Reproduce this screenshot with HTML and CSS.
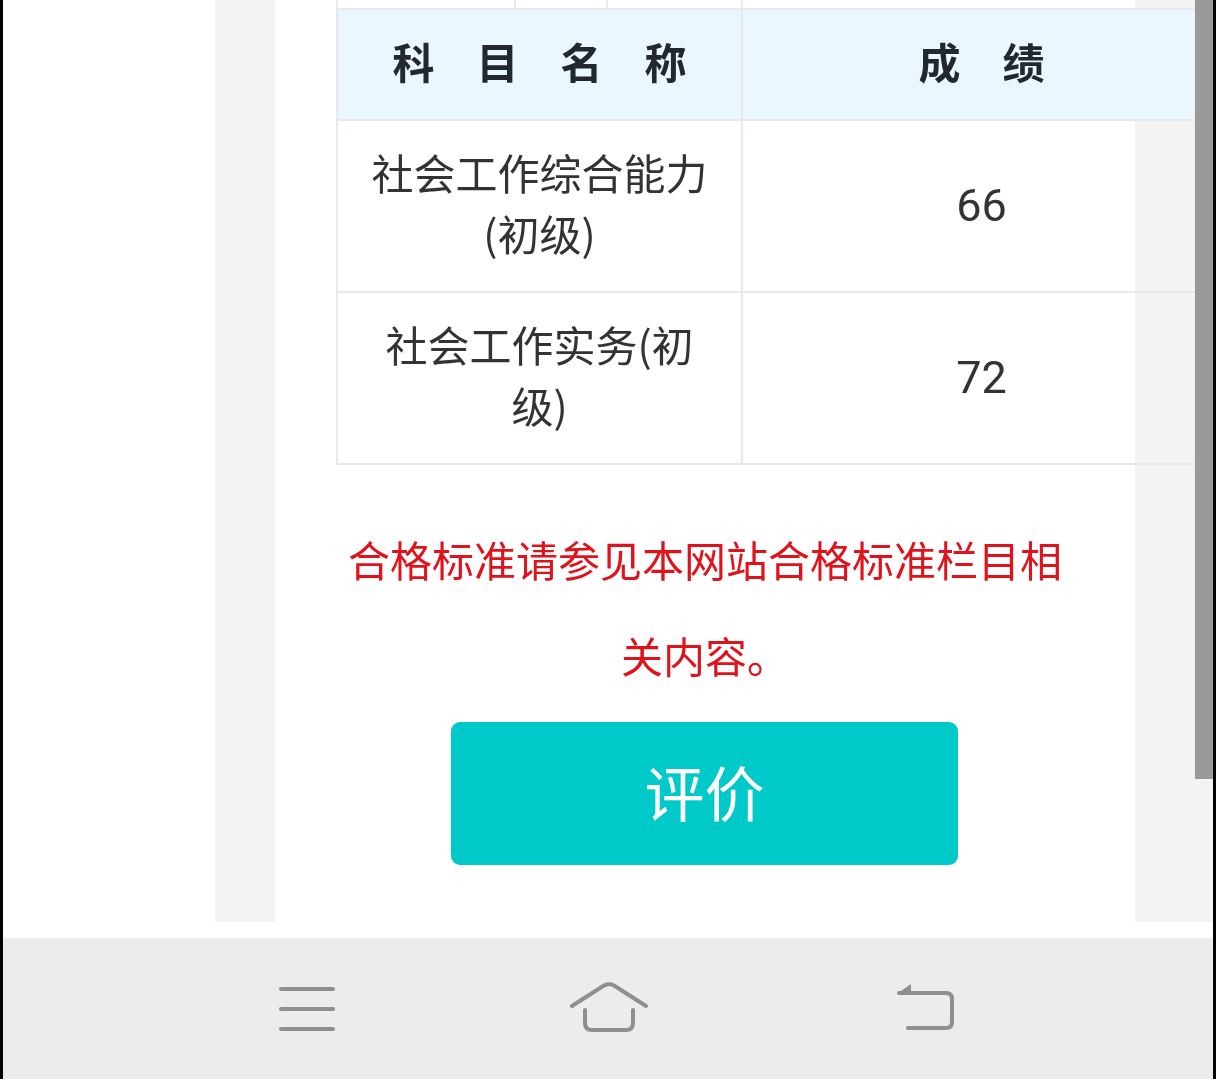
FILE: index.html
```html
<!DOCTYPE html>
<html lang="zh-CN">
<head>
    <meta charset="UTF-8">
    <meta name="viewport" content="width=device-width, initial-scale=1.0">
    <title>成绩查询</title>
    <link rel="stylesheet" href="styles.css">
</head>
<body>
    <div class="screen">
        <div class="viewport">
            <div class="page">
                <div class="card">
                    <table class="scores">
                        <colgroup>
                            <col class="col-a">
                            <col class="col-b">
                            <col class="col-c">
                            <col class="col-d">
                        </colgroup>
                        <tr class="cut-row">
                            <td></td>
                            <td></td>
                            <td></td>
                            <td></td>
                        </tr>
                        <tr class="head-row">
                            <th colspan="3">科　目　名　称</th>
                            <th>成　绩</th>
                        </tr>
                        <tr>
                            <td colspan="3">社会工作综合能力(初级)</td>
                            <td class="score">66</td>
                        </tr>
                        <tr>
                            <td colspan="3">社会工作实务(初级)</td>
                            <td class="score">72</td>
                        </tr>
                    </table>
                    <p class="note">合格标准请参见本网站合格标准栏目相关内容。</p>
                    <button class="rate-btn">评价</button>
                </div>
                <div class="scrollbar"></div>
            </div>
        </div>
        <div class="navbar">
            <svg class="nav-menu" width="56" height="52" viewBox="0 0 56 52" fill="none" stroke="#8f8f8f" stroke-width="4" stroke-linecap="round">
                <path d="M2 7H54"></path>
                <path d="M2 27H54"></path>
                <path d="M2 47H54"></path>
            </svg>
            <svg class="nav-home" width="80" height="52" viewBox="0 0 80 52" fill="none" stroke="#8f8f8f" stroke-width="4" stroke-linecap="round" stroke-linejoin="round">
                <path d="M3 24L35 3.500Q40 1 45 3.500L77 24"></path>
                <path d="M16 28V41Q16 48 23 48H57Q64 48 64 41V28"></path>
            </svg>
            <svg class="nav-back" width="60" height="52" viewBox="0 0 60 52" fill="none" stroke="#8f8f8f" stroke-width="4" stroke-linecap="round" stroke-linejoin="round">
                <path d="M3 11H50Q56 11 56 17V40Q56 46 50 46H12"></path>
                <path d="M15 2V11H2Z" fill="#8f8f8f" stroke="none"></path>
            </svg>
        </div>
    </div>
</body>
</html>
```

FILE: styles.css
```css
html, body {
    margin: 0;
    padding: 0;
    background: #fff;
}
.screen {
    box-sizing: border-box;
    width: 1216px;
    height: 1079px;
    border-left: 3px solid #000;
    border-right: 3px solid #000;
    overflow: hidden;
    font-family: "Noto Sans CJK SC", "Noto Sans", sans-serif;
    filter: blur(0.5px);
}
.viewport {
    height: 938px;
    padding-left: 212px;
    box-sizing: border-box;
    background: #fff;
}
.page {
    position: relative;
    box-sizing: border-box;
    height: 922px;
    padding-left: 60px;
    background: #f3f3f3;
    overflow: hidden;
}
.card {
    width: 860px;
    height: 922px;
    background: #fff;
}
.scores {
    border-collapse: collapse;
    table-layout: fixed;
    width: 884px;
    margin-left: 61px;
    color: #333;
    font-size: 42px;
    line-height: 61px;
    text-align: center;
}
.col-a { width: 178px; }
.col-b { width: 92px; }
.col-c { width: 135px; }
.col-d { width: 479px; }
.scores td, .scores th {
    border: 2px solid #e8e9ea;
    padding: 20px 30px 28px;
}
.scores .cut-row td {
    height: 8px;
    padding: 0;
    border-top: none;
}
.scores .score {
    font-family: Roboto, sans-serif;
    font-size: 45px;
    padding: 23px 30px 25px;
}
.head-row th {
    background: #ebf7ff;
    color: #23272e;
    font-size: 42px;
    font-weight: 700;
    line-height: 61px;
}
.note {
    margin: 46px 0 0;
    padding: 0 62px;
    color: #e0121c;
    font-size: 42px;
    line-height: 96px;
    text-align: center;
}
.rate-btn {
    display: block;
    width: 507px;
    height: 143px;
    margin: 19px 0 0 176px;
    padding: 0 0 6px;
    border: none;
    border-radius: 9px;
    background: #00c9c9;
    color: #fff;
    font-family: inherit;
    font-size: 60px;
}
.scrollbar {
    position: absolute;
    top: 0;
    right: 0;
    width: 18px;
    height: 779px;
    background: #999;
}
.navbar {
    display: flex;
    align-items: flex-start;
    box-sizing: border-box;
    height: 141px;
    padding: 44px 0 0 276px;
    background: #ececec;
}
.nav-home { margin-left: 234px; }
.nav-back { margin-left: 247px; }
```
